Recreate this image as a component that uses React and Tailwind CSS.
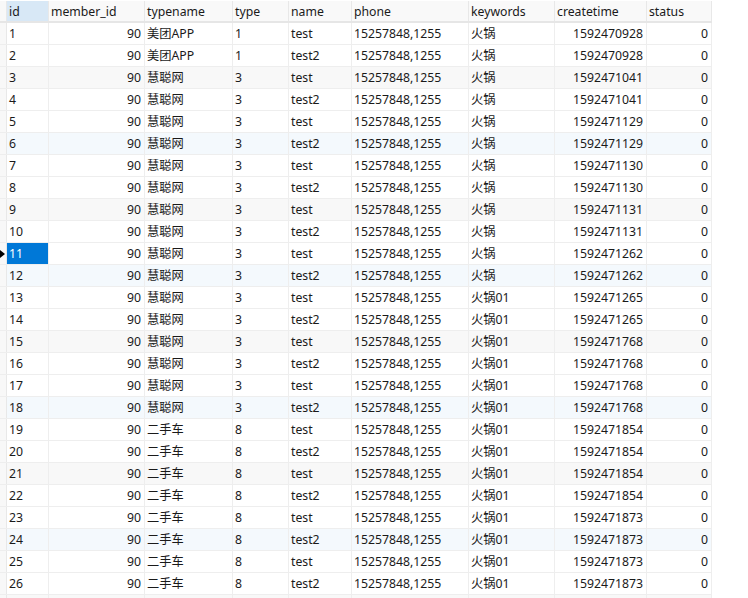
const columns = [
	{ key: 'id', width: 'w-[42px]', label: 'id' },
	{ key: 'member_id', width: 'w-[96px]', label: 'member_id', right: true },
	{ key: 'typename', width: 'w-[88px]', label: 'typename' },
	{ key: 'type', width: 'w-[56px]', label: 'type' },
	{ key: 'name', width: 'w-[63px]', label: 'name' },
	{ key: 'phone', width: 'w-[117px]', label: 'phone' },
	{ key: 'keywords', width: 'w-[86px]', label: 'keywords' },
	{ key: 'createtime', width: 'w-[92px]', label: 'createtime', right: true },
	{ key: 'status', width: 'w-[65px]', label: 'status', right: true },
];

const times = [
	1592470928, 1592470928, 1592471041, 1592471041, 1592471129, 1592471129, 1592471130, 1592471130,
	1592471131, 1592471131, 1592471262, 1592471262, 1592471265, 1592471265, 1592471768, 1592471768,
	1592471768, 1592471768, 1592471854, 1592471854, 1592471854, 1592471854, 1592471873, 1592471873,
	1592471873, 1592471873,
];

const rows = times.map((createtime, i) => {
	const id = i + 1;
	const [typename, type] = id <= 2 ? ['美团APP', 1] : id <= 18 ? ['慧聪网', 3] : ['二手车', 8];
	return {
		id,
		member_id: 90,
		typename,
		type,
		name: id % 2 ? 'test' : 'test2',
		phone: '15257848,1255',
		keywords: id <= 12 ? '火锅' : '火锅01',
		createtime,
		status: 0,
	};
});

function rowColor(id) {
	if (id % 6 === 3) return 'bg-[#f8f8f8]';
	if (id % 6 === 0) return 'bg-[#f4f9fd]';
	return 'bg-white';
}

export default function App() {
	return (
		<div className="h-[598px] w-[748px] overflow-hidden bg-white font-['Noto_Sans','Noto_Sans_CJK_SC',sans-serif] text-[12.25px] text-[#1a1a1a]">
			<div className="w-[712px]">
				<div className="flex h-[23px] border-b-2 border-[#e6e6e6] pt-px">
					<div className="w-[7px] shrink-0 border-r border-[#e8e8e8] bg-[#f8f8f8]" />
					{columns.map((col) => (
						<div
							key={col.key}
							className={`${col.width} shrink-0 border-r border-[#e8e8e8] pl-[2px] leading-[22px] ${col.key === 'id' ? 'bg-[#d8e8f6]' : 'bg-[#f9f9f9]'}`}
						>
							{col.label}
						</div>
					))}
				</div>
				{rows.map((row) => (
					<div key={row.id} className={`flex h-[22px] border-b border-[#eeeeee] ${rowColor(row.id)}`}>
						<div className="flex w-[7px] shrink-0 items-center border-r border-[#e8e8e8] bg-[#f8f8f8]">
							{row.id === 11 && <div className="h-0 w-0 border-y-[4px] border-l-[5px] border-y-transparent border-l-black" />}
						</div>
						{columns.map((col) => (
							<div
								key={col.key}
								className={`${col.width} shrink-0 border-r border-[#eeeeee] leading-[21px] ${col.right ? 'pr-[3px] text-right' : 'pl-[2px]'} ${row.id === 11 && col.key === 'id' ? 'bg-[#0078d7] text-white' : ''}`}
							>
								{row[col.key]}
							</div>
						))}
					</div>
				))}
				<div className="flex h-[22px]">
					<div className="w-[7px] shrink-0 border-r border-[#e8e8e8] bg-[#f8f8f8]" />
					{columns.map((col) => (
						<div key={col.key} className={`${col.width} shrink-0 border-r border-[#eeeeee] bg-[#f8f8f8]`} />
					))}
				</div>
			</div>
		</div>
	);
}
